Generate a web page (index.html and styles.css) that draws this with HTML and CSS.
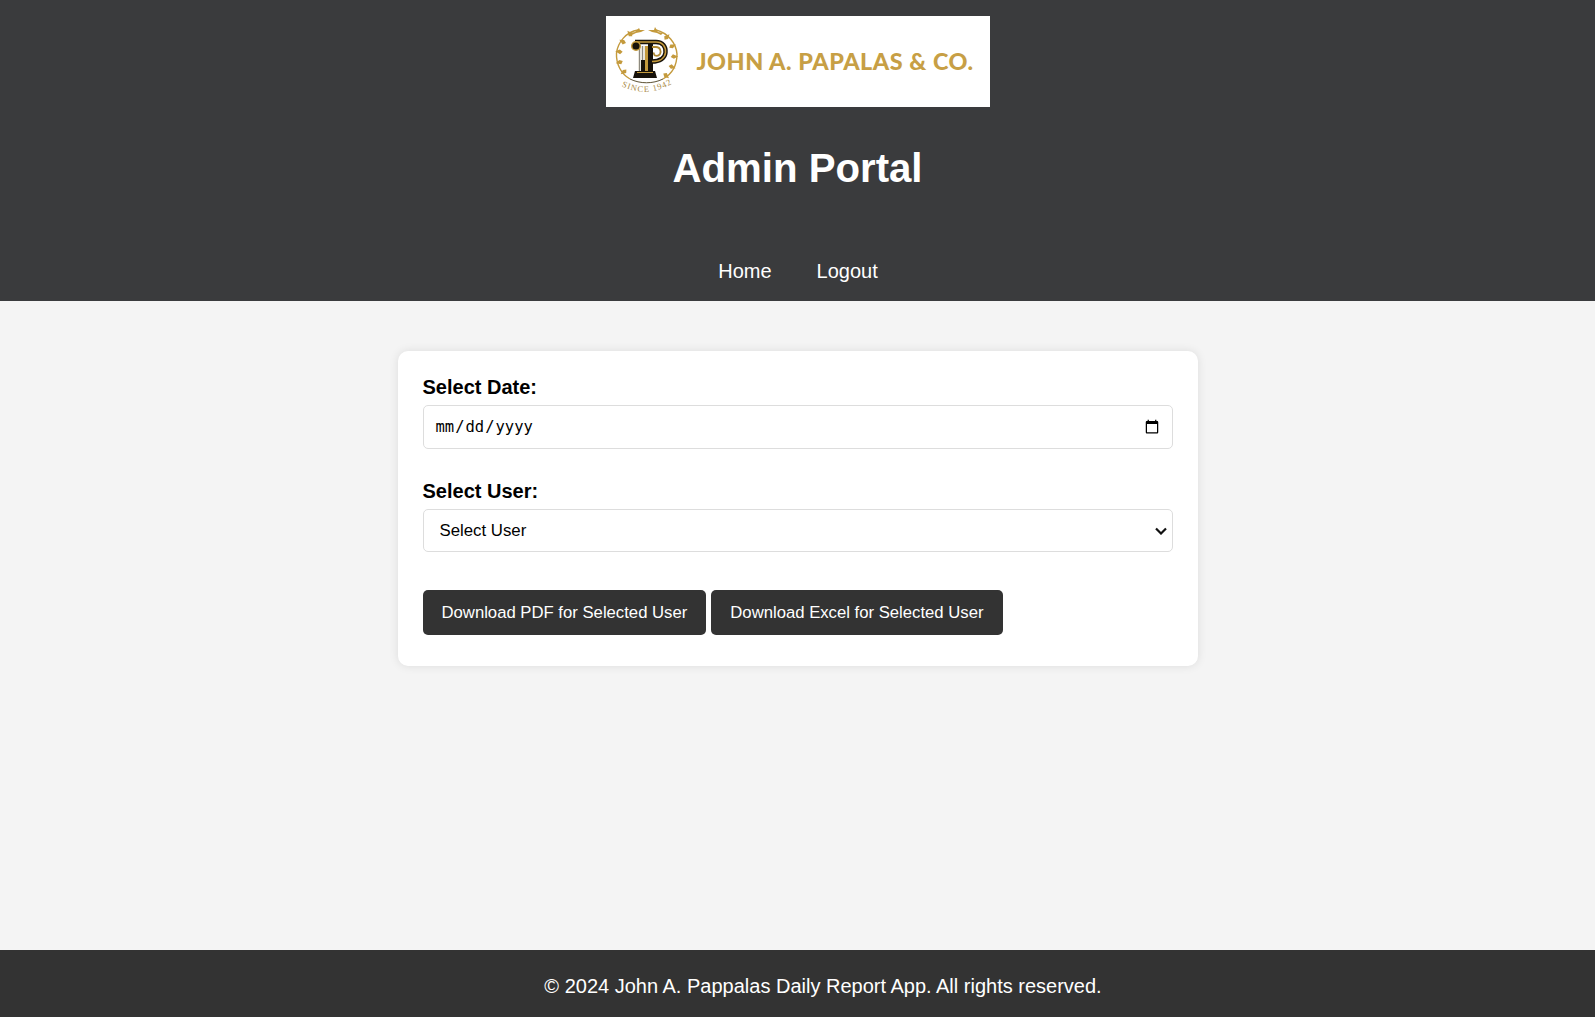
FILE: index.html
```html
<!DOCTYPE html>
<html lang="en">
<head>
<meta charset="utf-8">
<title>Admin Portal</title>
<link rel="stylesheet" href="styles.css">
</head>
<body>
<header class="site-header">
  <div class="logo">
    <svg class="logo-mark" viewBox="0 0 81 85" width="81" height="85" aria-hidden="true">
      <defs>
        <path id="leaf" d="M40.500 13.500l2.600-5 2 4.400-2 3z"/>
        <path id="arc" d="M13 69Q41 84 69 66"/>
      </defs>
      <path class="wreath" d="M32 14C20 16 12 26 10.500 37C10 48 15 58 24 63"/>
      <path class="wreath" d="M50 14C62 17 70 27 71 38C71 49 66 58 57 63"/>
      <path class="wreath-dark" d="M24 63C34 68 47 68 57 63"/>
      <g class="leaves">
        <use href="#leaf" transform="rotate(-42 40.500 40)"/>
        <use href="#leaf" transform="rotate(-64 40.500 40)"/>
        <use href="#leaf" transform="rotate(-86 40.500 40)"/>
        <use href="#leaf" transform="rotate(-108 40.500 40)"/>
        <use href="#leaf" transform="rotate(-130 40.500 40)"/>
        <use href="#leaf" transform="rotate(42 40.500 40)"/>
        <use href="#leaf" transform="rotate(64 40.500 40)"/>
        <use href="#leaf" transform="rotate(86 40.500 40)"/>
        <use href="#leaf" transform="rotate(108 40.500 40)"/>
        <use href="#leaf" transform="rotate(130 40.500 40)"/>
        <path d="M24 17l5-1 4-4 1 2 5 0-4 2-5 1-4 2z"/>
        <path d="M57 17l-5-1-3-5-1 3-6 0 4 2 5 1 4 2z"/>
      </g>
      <rect x="32" y="30" width="14" height="25" fill="#e9e6dc"/>
      <path d="M33.500 30v25M36.500 30v25" stroke="#8d8a80" stroke-width="1" fill="none"/>
      <rect x="39" y="30" width="3" height="25" fill="#c49a3c"/>
      <rect x="42" y="28" width="5" height="27" fill="#17120a"/>
      <rect x="35" y="44" width="4" height="11" fill="#17120a"/>
      <path class="p-dark" d="M29 26H50C57 26 60 31 59.500 36.500C59 42 54 45.500 46 45.500"/>
      <path class="p-gold" d="M29 26H50C57 26 60 31 59.500 36.500C59 42 54 45.500 46 45.500"/>
      <path class="p-spiral" d="M46 31H50C54 31 55.500 35 54 38C52 41 47 40 48 36.500"/>
      <circle cx="30" cy="30" r="4.300" fill="#17120a" stroke="#c49a3c" stroke-width="1.500"/>
      <path d="M29 55H49L51 62H27Z" fill="#17120a"/>
      <path d="M31 56.500H47" stroke="#c49a3c" stroke-width="1" fill="none"/>
      <text class="since"><textPath href="#arc" startOffset="50%" text-anchor="middle">SINCE 1942</textPath></text>
    </svg>
    <span class="logo-name">JOHN A. PAPALAS &amp; CO.</span>
  </div>
  <h1 class="title">Admin Portal</h1>
  <nav class="nav">
    <a href="#">Home</a>
    <a href="#">Logout</a>
  </nav>
</header>
<main class="main">
  <form class="card">
    <label class="label" for="date">Select Date:</label>
    <input class="field field-date" id="date" type="date">
    <label class="label" for="user">Select User:</label>
    <select class="field field-select" id="user">
      <option>Select User</option>
    </select>
    <div class="actions">
      <button class="btn" type="button">Download PDF for Selected User</button>
      <button class="btn" type="button">Download Excel for Selected User</button>
    </div>
  </form>
</main>
<footer class="site-footer">
  <p>© 2024 John A. Pappalas Daily Report App. All rights reserved.</p>
</footer>
</body>
</html>
```
FILE: styles.css
```css
* { box-sizing: border-box; }
html, body { margin: 0; height: 100%; }
body {
  min-height: 100vh;
  display: flex;
  flex-direction: column;
  background: #f4f4f4;
  color: #000;
  font-family: "Liberation Sans", Arial, sans-serif;
}
.site-header {
  height: 301px;
  flex: none;
  background: #3a3b3d;
  color: #fff;
  display: flex;
  flex-direction: column;
  align-items: center;
  padding-top: 16px;
}
.logo {
  position: relative;
  width: 384px;
  height: 91px;
  background: #fff;
  flex: none;
}
.logo-mark { position: absolute; left: 0; top: 0; }
.logo-mark .wreath { fill: none; stroke: #c49a3c; stroke-width: 1.4; }
.logo-mark .wreath-dark { fill: none; stroke: #4a3d1c; stroke-width: 0.9; }
.logo-mark .leaves { fill: #c49a3c; }
.logo-mark .p-dark { fill: none; stroke: #17120a; stroke-width: 4.4; }
.logo-mark .p-gold { fill: none; stroke: #c49a3c; stroke-width: 1.6; }
.logo-mark .p-spiral { fill: none; stroke: #b08a34; stroke-width: 1.8; }
.logo-mark .since {
  font-family: "Liberation Serif", serif;
  font-size: 8.5px;
  letter-spacing: 1px;
  fill: #a98a45;
}
.logo-name {
  position: absolute;
  left: 91px;
  top: 32px;
  font-family: Lato, sans-serif;
  font-weight: 900;
  font-size: 23.4px;
  line-height: 27px;
  letter-spacing: 0.52px;
  color: #c79f45;
  white-space: nowrap;
}
.title {
  margin: 39px 0 0;
  font-size: 40.2px;
  line-height: 46px;
  font-weight: 700;
}
.nav {
  margin-top: 68px;
  padding-left: 1px;
  display: flex;
  gap: 45px;
}
.nav a {
  color: #fff;
  text-decoration: none;
  font-size: 20px;
  line-height: 23px;
}
.main {
  flex: 1;
  display: flex;
  justify-content: center;
  align-items: flex-start;
  padding-top: 50px;
}
.card {
  width: 800px;
  height: 315px;
  background: #fff;
  border-radius: 10px;
  box-shadow: 0 0 10px rgba(0,0,0,0.1);
  padding: 25px;
}
.label {
  display: block;
  font-size: 20px;
  line-height: 23px;
  font-weight: 700;
  margin-bottom: 6px;
}
.field {
  display: block;
  width: 750px;
  background-color: #fff;
  border: 1px solid #ddd;
  border-radius: 5px;
  color: #000;
}
.field-date {
  height: 44px;
  padding: 10px 10px 10px 11px;
  margin-bottom: 31px;
  font-size: 15.5px;
  font-family: "DejaVu Sans Mono", monospace;
}
.field-select {
  height: 43px;
  padding: 10px 10px 10px 16px;
  font-size: 16.8px;
  font-family: "Liberation Sans", Arial, sans-serif;
  appearance: none;
  background-image: url("data:image/svg+xml,%3Csvg xmlns='http://www.w3.org/2000/svg' width='12' height='8' viewBox='0 0 12 8'%3E%3Cpath d='M1 1.500l5 5 5-5' fill='none' stroke='%23111' stroke-width='2.200'/%3E%3C/svg%3E");
  background-repeat: no-repeat;
  background-position: right 5px center;
}
.actions {
  margin-top: 38px;
  display: flex;
  gap: 5px;
}
.btn {
  height: 45px;
  padding: 0 19px;
  border: 0;
  border-radius: 5px;
  background: #333;
  color: #fff;
  font-family: "Liberation Sans", Arial, sans-serif;
  font-size: 16.7px;
  white-space: nowrap;
}
.site-footer {
  flex: none;
  height: 67px;
  background: #333;
  color: #fff;
  padding: 6px 0 0 51px;
  display: flex;
  justify-content: center;
  align-items: center;
}
.site-footer p { margin: 0; font-size: 20px; }
```
